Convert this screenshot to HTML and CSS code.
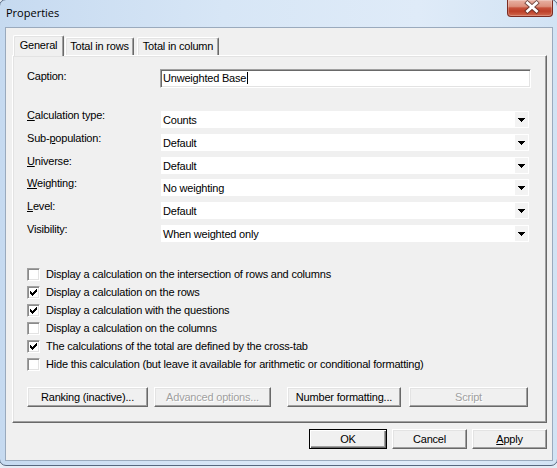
FILE: index.html
```html
<!DOCTYPE html>
<html>
<head>
<meta charset="utf-8">
<link rel="stylesheet" href="styles.css">
</head>
<body>
<div class="window">
  <div class="titlebar">
    <span class="title">Properties</span>
    <div class="close">
      <svg width="46" height="17" viewBox="0 0 46 17">
        <path d="M20.5 4 L29.5 12 M29.5 4 L20.5 12" stroke="#4a2a26" stroke-width="4.6" stroke-linecap="square" fill="none" opacity="0.7"/>
        <path d="M20.5 4 L29.5 12 M29.5 4 L20.5 12" stroke="#fff" stroke-width="2.8" stroke-linecap="square" fill="none"/>
      </svg>
    </div>
  </div>
  <div class="client">
    <div class="tabs">
      <div class="tab sel">General</div>
      <div class="tab t-rows">Total in rows</div>
      <div class="tab t-col">Total in column</div>
    </div>
    <div class="panel">
      <div class="row caption-row">
        <div class="lbl">Caption:</div>
        <div class="input">Unweighted Base<span class="caret"></span></div>
      </div>
      <div class="selects">
        <div class="row">
          <div class="lbl"><u>C</u>alculation type:</div>
          <div class="combo"><span class="val">Counts</span><span class="arrow"><svg width="7" height="4" viewBox="0 0 7 4"><path d="M0 0h7v1h-1v1h-1v1h-1v1h-1v-1h-1v-1h-1v-1h-1z" fill="#000"/></svg></span></div>
        </div>
        <div class="row">
          <div class="lbl">Sub-<u>p</u>opulation:</div>
          <div class="combo"><span class="val">Default</span><span class="arrow"><svg width="7" height="4" viewBox="0 0 7 4"><path d="M0 0h7v1h-1v1h-1v1h-1v1h-1v-1h-1v-1h-1v-1h-1z" fill="#000"/></svg></span></div>
        </div>
        <div class="row">
          <div class="lbl"><u>U</u>niverse:</div>
          <div class="combo"><span class="val">Default</span><span class="arrow"><svg width="7" height="4" viewBox="0 0 7 4"><path d="M0 0h7v1h-1v1h-1v1h-1v1h-1v-1h-1v-1h-1v-1h-1z" fill="#000"/></svg></span></div>
        </div>
        <div class="row">
          <div class="lbl"><u>W</u>eighting:</div>
          <div class="combo"><span class="val">No weighting</span><span class="arrow"><svg width="7" height="4" viewBox="0 0 7 4"><path d="M0 0h7v1h-1v1h-1v1h-1v1h-1v-1h-1v-1h-1v-1h-1z" fill="#000"/></svg></span></div>
        </div>
        <div class="row">
          <div class="lbl"><u>L</u>evel:</div>
          <div class="combo"><span class="val">Default</span><span class="arrow"><svg width="7" height="4" viewBox="0 0 7 4"><path d="M0 0h7v1h-1v1h-1v1h-1v1h-1v-1h-1v-1h-1v-1h-1z" fill="#000"/></svg></span></div>
        </div>
        <div class="row">
          <div class="lbl">Visibility:</div>
          <div class="combo"><span class="val">When weighted only</span><span class="arrow"><svg width="7" height="4" viewBox="0 0 7 4"><path d="M0 0h7v1h-1v1h-1v1h-1v1h-1v-1h-1v-1h-1v-1h-1z" fill="#000"/></svg></span></div>
        </div>
      </div>
      <div class="checks">
        <div class="chk"><span class="box"></span><span class="ctext">Display a calculation on the intersection of rows and columns</span></div>
        <div class="chk"><span class="box"><svg width="11" height="11" viewBox="1 1 11 11"><path d="M9 3h1v1h-1z M8 4h2v1h-2z M3 5h1v1h-1z M7 5h3v1h-3z M3 6h2v1h-2z M6 6h3v1h-3z M3 7h5v1h-5z M4 8h3v1h-3z M5 9h1v1h-1z" fill="#000"/></svg></span><span class="ctext">Display a calculation on the rows</span></div>
        <div class="chk"><span class="box"><svg width="11" height="11" viewBox="1 1 11 11"><path d="M9 3h1v1h-1z M8 4h2v1h-2z M3 5h1v1h-1z M7 5h3v1h-3z M3 6h2v1h-2z M6 6h3v1h-3z M3 7h5v1h-5z M4 8h3v1h-3z M5 9h1v1h-1z" fill="#000"/></svg></span><span class="ctext">Display a calculation with the questions</span></div>
        <div class="chk"><span class="box"></span><span class="ctext">Display a calculation on the columns</span></div>
        <div class="chk"><span class="box"><svg width="11" height="11" viewBox="1 1 11 11"><path d="M9 3h1v1h-1z M8 4h2v1h-2z M3 5h1v1h-1z M7 5h3v1h-3z M3 6h2v1h-2z M6 6h3v1h-3z M3 7h5v1h-5z M4 8h3v1h-3z M5 9h1v1h-1z" fill="#000"/></svg></span><span class="ctext">The calculations of the total are defined by the cross-tab</span></div>
        <div class="chk"><span class="box"></span><span class="ctext">Hide this calculation (but leave it available for arithmetic or conditional formatting)</span></div>
      </div>
      <div class="btnrow">
        <div class="btn b-rank">Ranking (inactive)...</div>
        <div class="btn b-adv disabled">Advanced options...</div>
        <div class="btn b-num">Number formatting...</div>
        <div class="btn b-script disabled">Script</div>
      </div>
    </div>
    <div class="footer">
      <div class="btn b-ok">OK</div>
      <div class="btn b-cancel">Cancel</div>
      <div class="btn b-apply"><u>A</u>pply</div>
    </div>
  </div>
</div>
</body>
</html>
```
FILE: styles.css
```css
html, body {
  margin: 0;
  padding: 0;
}
body {
  width: 557px;
  height: 468px;
  overflow: hidden;
  background: #e4ecf5;
  font-family: "Liberation Sans", Arial, sans-serif;
  font-size: 11px;
  letter-spacing: -0.2px;
  color: #000;
}
u {
  text-decoration: underline;
  text-underline-offset: 1px;
}
.window {
  margin: -1px 0 0 -1px;
  width: 559px;
  height: 467px;
  box-sizing: border-box;
  border: 1px solid #56687f;
  border-radius: 7px;
  overflow: hidden;
  background: linear-gradient(90deg, #c6daf0 0%, #d7e6f6 40%, #dfebf8 75%, #d2e3f4 100%);
  display: flex;
  flex-direction: column;
}
.titlebar {
  height: 27px;
  flex: none;
  display: flex;
  align-items: flex-start;
}
.title {
  font-family: "Open Sans", "Noto Sans", sans-serif;
  font-size: 11px;
  letter-spacing: 0;
  line-height: 15px;
  padding: 5px 0 0 6px;
}
.close {
  margin-left: auto;
  margin-right: 4px;
  width: 46px;
  height: 17px;
  box-sizing: border-box;
  border: 1px solid #7b2c22;
  border-top: none;
  border-radius: 0 0 4px 4px;
  background: linear-gradient(180deg, #e8b1a3 0%, #dc8f7c 40%, #c6513b 50%, #bd3f28 70%, #d06a4f 100%);
  box-shadow: inset 0 0 0 1px rgba(255,255,255,0.25);
}
.close svg {
  display: block;
  margin: -1px 0 0 -1px;
}
.client {
  margin-left: 5px;
  width: 548px;
  height: 434px;
  flex: none;
  box-sizing: border-box;
  border: 1px solid #9aaabd;
  background: #f0f0f0;
  padding: 7px 5px 0 6px;
  display: flex;
  flex-direction: column;
}
.tabs {
  height: 20px;
  display: flex;
  align-items: flex-end;
  flex: none;
}
.tab {
  height: 18px;
  box-sizing: border-box;
  border-top: 1px solid #fff;
  border-left: 1px solid #fff;
  border-right: 1px solid #696969;
  border-radius: 2px 2px 0 0;
  box-shadow: inset -1px 0 0 #a0a0a0, inset 1px 1px 0 #e3e3e3;
  background: #f0f0f0;
  text-align: center;
  line-height: 16px;
  white-space: nowrap;
}
.tab.sel {
  height: 21px;
  width: 51px;
  margin-left: 1px;
  margin-bottom: -1px;
  padding-top: 1px;
  position: relative;
  z-index: 1;
}
.t-rows {
  width: 69px;
  margin-left: 1px;
}
.t-col {
  width: 82px;
  margin-left: 3px;
}
.panel {
  height: 368px;
  flex: none;
  box-sizing: border-box;
  border: 1px solid;
  border-color: #fff #696969 #696969 #fff;
  box-shadow: inset -1px -1px 0 #a0a0a0, inset 1px 1px 0 #e3e3e3;
  padding: 13px 0 0 14px;
  display: flex;
  flex-direction: column;
}
.row {
  display: flex;
  height: 17px;
}
.caption-row {
  height: 19px;
}
.lbl {
  width: 133px;
  flex: none;
  line-height: 13px;
  margin-top: -2px;
  white-space: nowrap;
}
.caption-row .lbl {
  margin-top: 1px;
}
.input {
  width: 371px;
  height: 19px;
  box-sizing: border-box;
  border: 1px solid;
  border-color: #a0a0a0 #fff #fff #a0a0a0;
  box-shadow: inset 1px 1px 0 #696969, inset -1px -1px 0 #e3e3e3;
  background: #fff;
  padding: 1px 0 0 2px;
  line-height: 15px;
  white-space: nowrap;
}
.caret {
  display: inline-block;
  width: 1px;
  height: 12px;
  background: #000;
  vertical-align: -2px;
  margin-left: 1px;
}
.selects {
  margin-top: 23px;
  display: flex;
  flex-direction: column;
  gap: 5.8px;
}
.combo {
  margin-left: 1px;
  width: 368px;
  height: 17px;
  background: #fff;
  display: flex;
}
.val {
  flex: 1;
  padding: 1px 0 0 2px;
  line-height: 16px;
  white-space: nowrap;
}
.arrow {
  width: 13px;
  height: 15px;
  margin: 1px 1px 1px 0;
  background: #f3f3f3;
  box-sizing: border-box;
  padding-top: 1px;
  display: flex;
  align-items: center;
  justify-content: center;
}
.arrow svg {
  display: block;
}
.checks {
  margin-top: 26px;
  display: flex;
  flex-direction: column;
}
.chk {
  height: 18px;
  display: flex;
  align-items: flex-start;
}
.box {
  width: 13px;
  height: 13px;
  flex: none;
  box-sizing: border-box;
  border: 1px solid;
  border-color: #a0a0a0 #fff #fff #a0a0a0;
  box-shadow: inset 1px 1px 0 #8a8a8a, inset -1px -1px 0 #e3e3e3;
  background: #fff;
}
.box svg {
  display: block;
}
.ctext {
  margin-left: 6px;
  line-height: 13px;
  white-space: nowrap;
}
.btnrow {
  margin-top: 11px;
  display: flex;
}
.btn {
  height: 20px;
  flex: none;
  box-sizing: border-box;
  border: 1px solid;
  border-color: #fff #696969 #696969 #fff;
  box-shadow: inset -1px -1px 0 #a0a0a0, inset 1px 1px 0 #e3e3e3;
  background: #f0f0f0;
  text-align: center;
  line-height: 18px;
  white-space: nowrap;
}
.disabled {
  color: #a0a0a0;
  text-shadow: 1px 1px 0 #fff;
}
.b-rank { width: 121px; }
.b-adv { width: 117px; margin-left: 6px; }
.b-num { width: 114px; margin-left: 16px; }
.b-script { width: 119px; margin-left: 8px; }
.footer {
  margin-top: 6px;
  display: flex;
  justify-content: flex-end;
  gap: 5px;
}
.b-ok {
  width: 78px;
  border-color: #000;
  box-shadow: inset 1px 1px 0 #fff, inset -1px -1px 0 #696969, inset -2px -2px 0 #a0a0a0;
}
.b-cancel { width: 75px; }
.b-apply { width: 75px; }
```
